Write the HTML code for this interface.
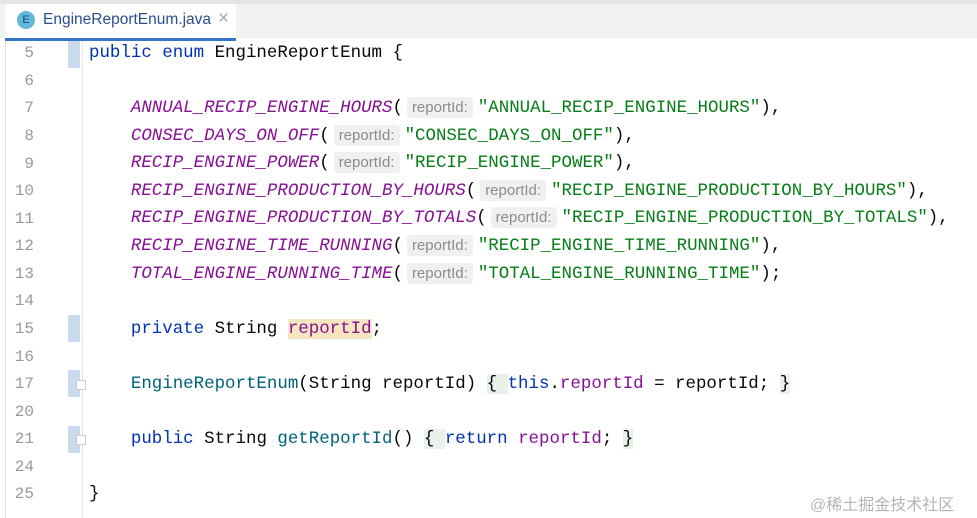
<!DOCTYPE html>
<html><head><style>
body{margin:0;width:977px;height:518px;overflow:hidden;background:#fff;position:relative;font-family:"Liberation Mono",monospace;}
.tabbar{position:absolute;left:0;top:0;width:977px;height:38px;background:#f2f2f2;border-top:4px solid #e4e4e4;box-sizing:border-box}
.tab{position:absolute;left:5px;top:4px;width:231px;height:34px;background:#fff;border-bottom:3px solid #3574c6;box-sizing:content-box}
.tab .ic{position:absolute;left:12px;top:7px;width:18px;height:18px;border-radius:50%;background:#5fb9dc;color:#1c4a70;font:11px "Liberation Sans",sans-serif;text-align:center;line-height:18px}
.tab .t{position:absolute;left:38px;top:7px;font:15.5px "Liberation Sans",sans-serif;color:#2b4e8c}
.tab .x{position:absolute;left:213px;top:4px;font:19px "Liberation Sans",sans-serif;color:#aaa}
.gut{position:absolute;left:5px;top:41px;width:76px;height:477px;background:#fff;border-left:1px solid #ddd;border-right:1px solid #e8e8e8}
.ln{position:absolute;left:12px;width:22px;text-align:right;font-size:16px;color:#999}
.mk{position:absolute;left:68px;width:12px;height:27px;background:#c9dbed}
.fold{position:absolute;left:76px;width:8px;height:8px;border:1px solid #ccc;background:#fff}
.code{position:absolute;left:89px;font-size:17.45px;white-space:pre;color:#080808;line-height:27px}
.k{color:#0033b3}.c{color:#871094;font-style:italic}.s{color:#067d17}.f{color:#00627a}.p{color:#871094}
.h{font:15px "Liberation Sans",sans-serif;color:#8c8c8c;background:#f0f0f0;padding:2px 5px;border-radius:3px;margin:0 5px 0 4px}
.b{background:#e8f2e8}
.wm{position:absolute;left:810px;top:491px;font:16px "Liberation Sans","Noto Sans CJK SC",sans-serif;color:#b5b5b5}
</style></head><body>
<div class="tabbar"></div>
<div class="tab"><div class="ic">E</div><div class="t">EngineReportEnum.java</div><div class="x">×</div></div>
<div class="gut"></div>
<div class="ln" style="top:44px">5</div>
<div class="ln" style="top:72px">6</div>
<div class="ln" style="top:99px">7</div>
<div class="ln" style="top:127px">8</div>
<div class="ln" style="top:155px">9</div>
<div class="ln" style="top:182px">10</div>
<div class="ln" style="top:210px">11</div>
<div class="ln" style="top:237px">12</div>
<div class="ln" style="top:265px">13</div>
<div class="ln" style="top:292px">14</div>
<div class="ln" style="top:320px">15</div>
<div class="ln" style="top:348px">16</div>
<div class="ln" style="top:375px">17</div>
<div class="ln" style="top:403px">20</div>
<div class="ln" style="top:430px">21</div>
<div class="ln" style="top:458px">24</div>
<div class="ln" style="top:485px">25</div>
<div class="mk" style="top:41px"></div>
<div class="mk" style="top:315px"></div>
<div class="mk" style="top:370px"></div>
<div class="mk" style="top:426px"></div>
<div class="fold" style="top:380px"></div>
<div class="fold" style="top:435px"></div>
<div class="code" style="top:40px"><span class="k">public enum</span> EngineReportEnum {</div>
<div class="code" style="top:95px">    <span class="c">ANNUAL_RECIP_ENGINE_HOURS</span>(<span class="h">reportId:</span><span class="s">"ANNUAL_RECIP_ENGINE_HOURS"</span>),</div>
<div class="code" style="top:123px">    <span class="c">CONSEC_DAYS_ON_OFF</span>(<span class="h">reportId:</span><span class="s">"CONSEC_DAYS_ON_OFF"</span>),</div>
<div class="code" style="top:150px">    <span class="c">RECIP_ENGINE_POWER</span>(<span class="h">reportId:</span><span class="s">"RECIP_ENGINE_POWER"</span>),</div>
<div class="code" style="top:178px">    <span class="c">RECIP_ENGINE_PRODUCTION_BY_HOURS</span>(<span class="h">reportId:</span><span class="s">"RECIP_ENGINE_PRODUCTION_BY_HOURS"</span>),</div>
<div class="code" style="top:205px">    <span class="c">RECIP_ENGINE_PRODUCTION_BY_TOTALS</span>(<span class="h">reportId:</span><span class="s">"RECIP_ENGINE_PRODUCTION_BY_TOTALS"</span>),</div>
<div class="code" style="top:233px">    <span class="c">RECIP_ENGINE_TIME_RUNNING</span>(<span class="h">reportId:</span><span class="s">"RECIP_ENGINE_TIME_RUNNING"</span>),</div>
<div class="code" style="top:261px">    <span class="c">TOTAL_ENGINE_RUNNING_TIME</span>(<span class="h">reportId:</span><span class="s">"TOTAL_ENGINE_RUNNING_TIME"</span>);</div>
<div class="code" style="top:316px">    <span class="k">private</span> String <span class="p" style="background:#f5e6c0">reportId</span>;</div>
<div class="code" style="top:371px">    <span class="f">EngineReportEnum</span>(String reportId) <span class="b">{ </span><span class="k">this</span>.<span class="p">reportId</span> = reportId; <span class="b">}</span></div>
<div class="code" style="top:426px">    <span class="k">public</span> String <span class="f">getReportId</span>() <span class="b">{ </span><span class="k">return</span> <span class="p">reportId</span>; <span class="b">}</span></div>
<div class="code" style="top:481px">}</div>
<div class="wm">@稀土掘金技术社区</div>
</body></html>
